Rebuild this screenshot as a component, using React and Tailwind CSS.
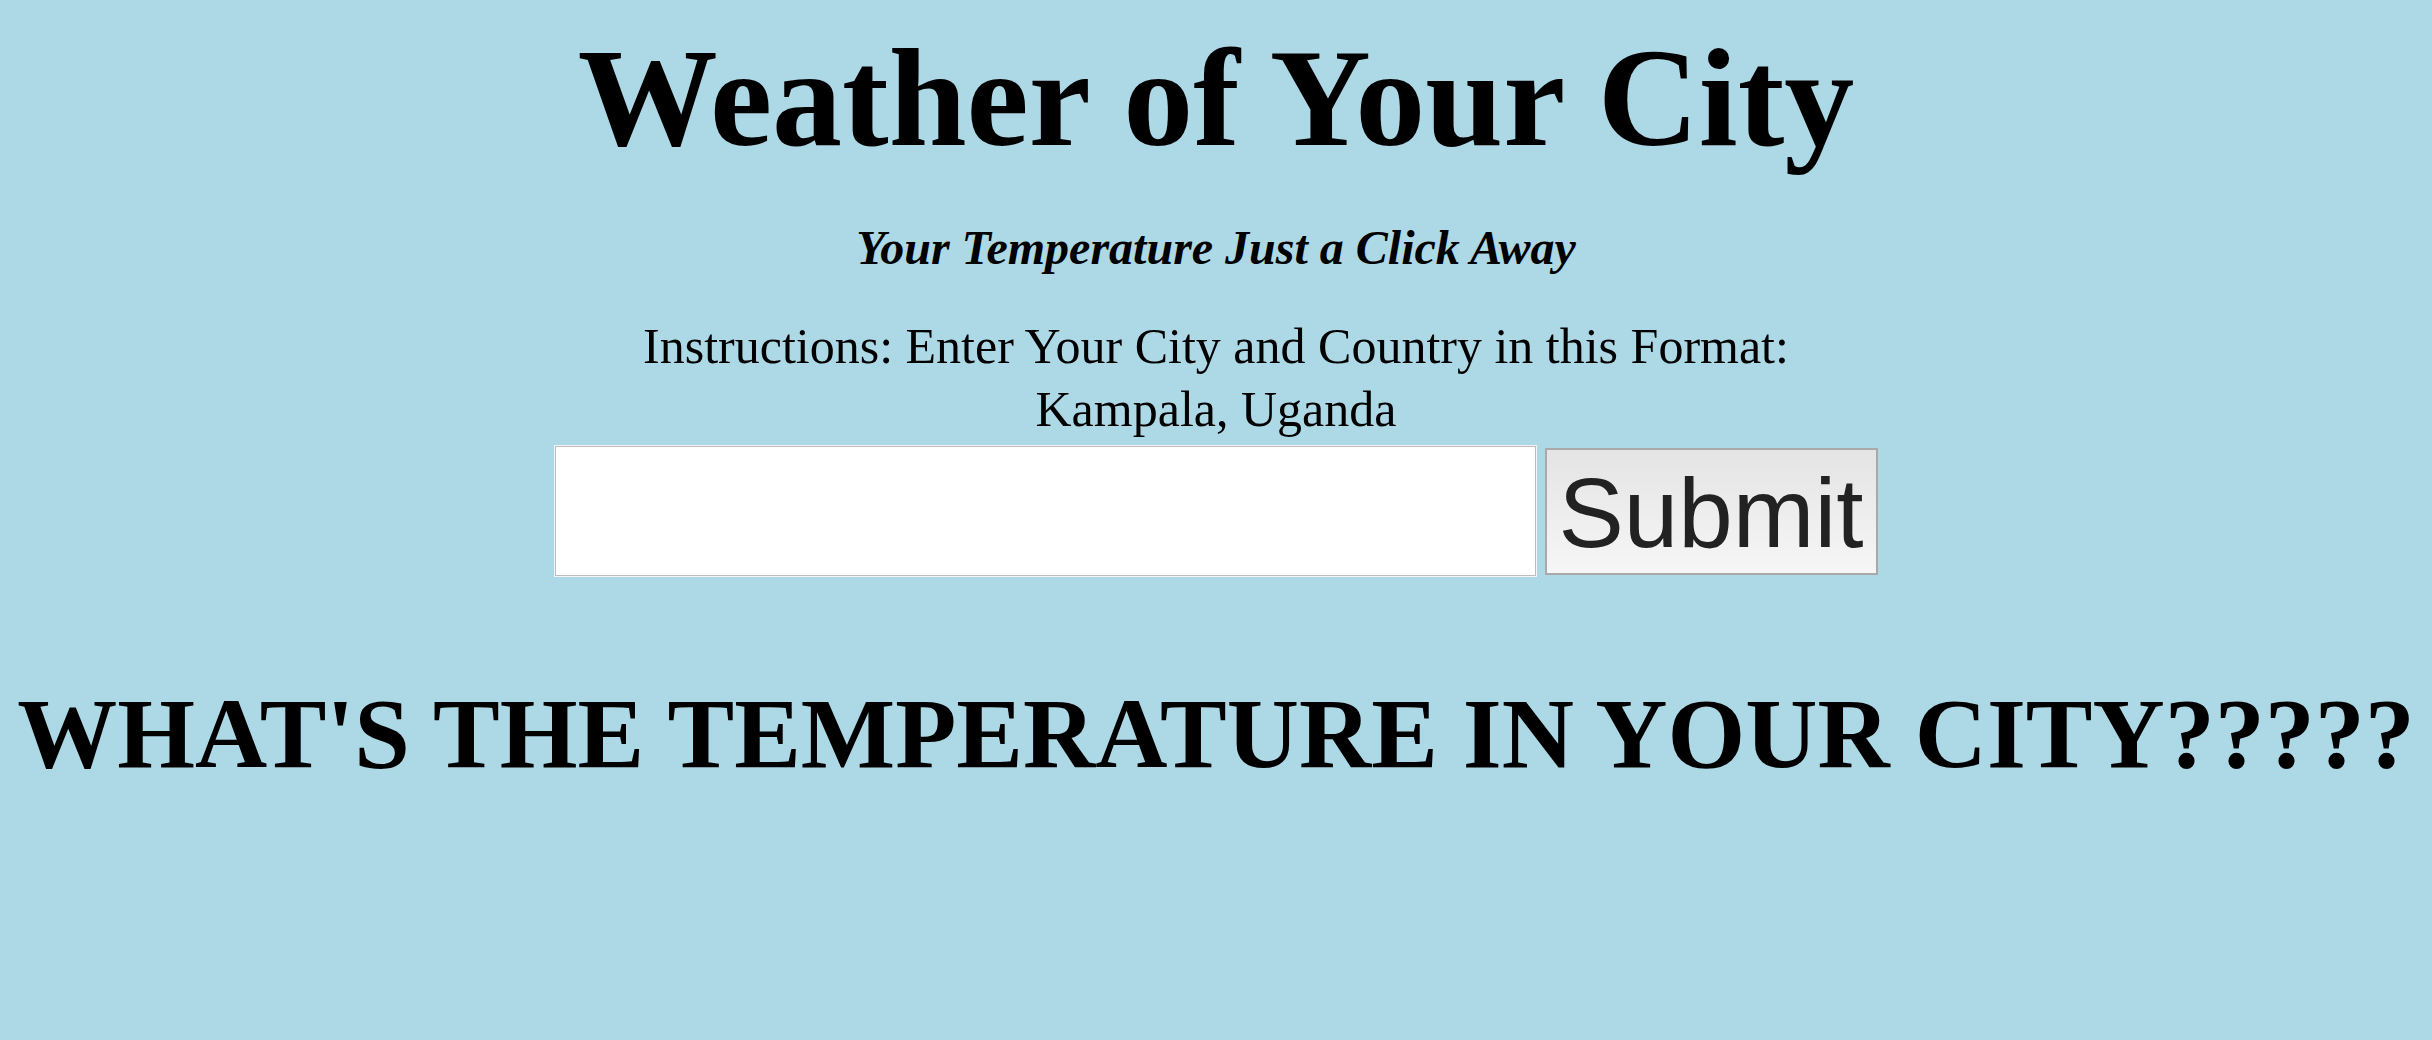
export default function App() {
  return (
    <div className="min-h-screen bg-[#add8e6] text-black text-center font-['Liberation_Serif','Times_New_Roman',serif]">
      <h1 className="pt-[28px] text-[140px] leading-none font-bold">Weather of Your City</h1>
      <h3 className="mt-[56px] text-[48px] leading-none font-bold italic">Your Temperature Just a Click Away</h3>
      <p className="mt-[43px] text-[50px] leading-[63px]">
        Instructions: Enter Your City and Country in this Format:
        <br />
        Kampala, Uganda
      </p>
      <form className="mt-[5px] flex justify-center items-center gap-[9px]" onSubmit={(e) => e.preventDefault()}>
        <input
          type="text"
          className="w-[981px] h-[130px] bg-white border border-[#bdbdbd] shadow-[0_0_0_1px_#f4f4f4] outline-none px-2 text-[48px]"
        />
        <button
          type="submit"
          className="w-[333px] h-[127px] pt-[4px] border-2 border-[#a9a9a9] bg-linear-to-b from-[#e4e4e4] to-[#f6f6f6] text-[#222] text-[98px] leading-none font-['Liberation_Sans',Arial,sans-serif]"
        >
          Submit
        </button>
      </form>
      <h1 className="mt-[108px] text-[100px] leading-none font-bold whitespace-nowrap">
        WHAT'S THE TEMPERATURE IN YOUR CITY?????
      </h1>
    </div>
  );
}
